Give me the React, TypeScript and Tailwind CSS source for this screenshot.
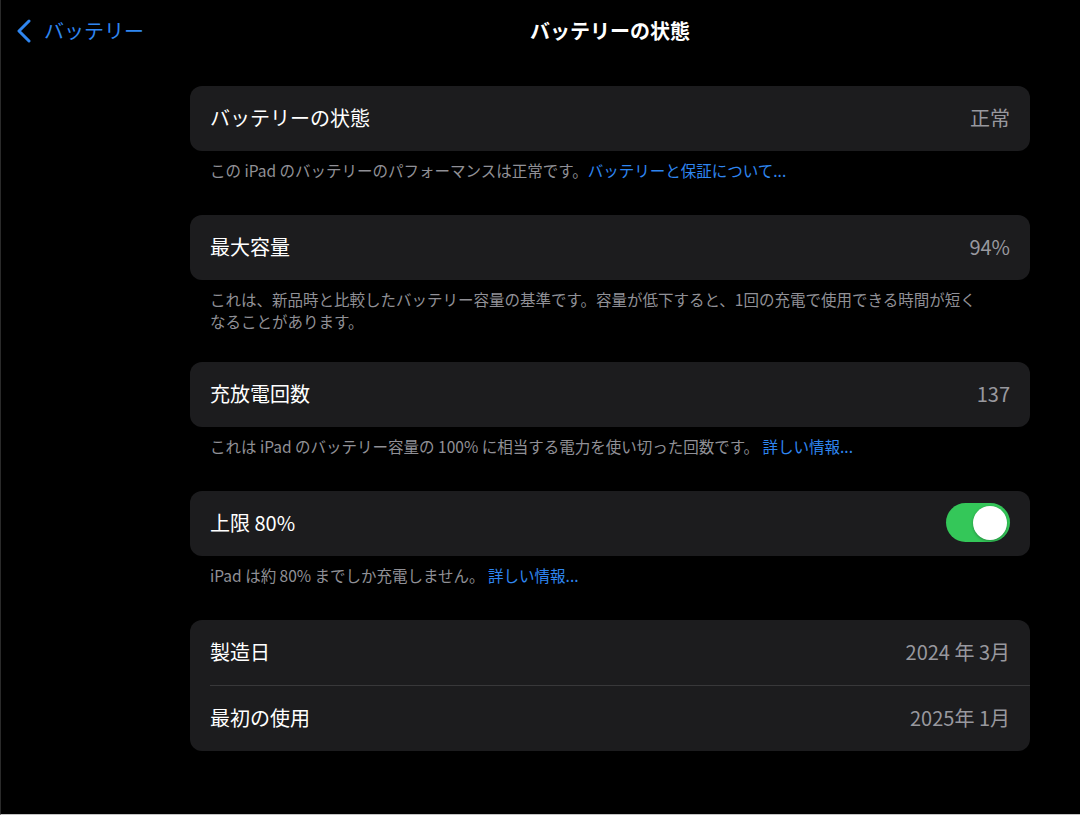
import React from "react";

const font = { fontFamily: '"Noto Sans CJK JP", "Noto Sans", sans-serif' };

function Row({ label, value, children }: { label: string; value?: string; children?: React.ReactNode }) {
  return (
    <div className="h-[65px] px-[20px] pb-[2px] flex items-center justify-between">
      <span className="text-[20px] text-white">{label}</span>
      {value !== undefined ? <span className="text-[20px] text-[#98989e]">{value}</span> : children}
    </div>
  );
}

function Card({ children }: { children: React.ReactNode }) {
  return <div className="rounded-[12px] bg-[#1c1c1e] overflow-hidden">{children}</div>;
}

function Footer({ children }: { children: React.ReactNode }) {
  return (
    <div className="px-[20px] pt-[8px] pb-[34px] text-[15.5px] leading-[22px] text-[#909096]">
      <div className="h-auto">{children}</div>
    </div>
  );
}

function Link({ children }: { children: React.ReactNode }) {
  return <span className="text-[#2f86f0]">{children}</span>;
}

export default function App() {
  return (
    <div
      className="w-[1080px] h-[815px] bg-black border-l border-l-[#2a2a2a] border-b border-b-[#c4c4c4] overflow-hidden"
      style={font}
    >
      <div className="relative h-[62px] flex items-center">
        <div className="absolute left-[15px] top-0 h-full flex items-center gap-[12px] text-[#2f86f0]">
          <svg width="16" height="24" viewBox="0 0 16 24" fill="none">
            <path d="M13 2 L3 12 L13 22" stroke="#2f86f0" strokeWidth="3" strokeLinecap="round" strokeLinejoin="round" />
          </svg>
          <span className="text-[20px]">バッテリー</span>
        </div>
        <div className="ml-[189px] mr-[50px] flex-1 text-center text-[20px] font-bold text-white">
          バッテリーの状態
        </div>
      </div>
      <div className="pl-[189px] pr-[50px] pt-[24px]">
        <Card>
          <Row label="バッテリーの状態" value="正常" />
        </Card>
        <Footer>
          この iPad のバッテリーのパフォーマンスは正常です。<Link>バッテリーと保証について...</Link>
        </Footer>

        <Card>
          <Row label="最大容量" value="94%" />
        </Card>
        <Footer>
          これは、新品時と比較したバッテリー容量の基準です。容量が低下すると、1回の充電で使用できる時間が短く
          <br />
          なることがあります。
        </Footer>

        <div className="-mt-[4px]">
          <Card>
            <Row label="充放電回数" value="137" />
          </Card>
        </div>
        <Footer>
          これは iPad のバッテリー容量の 100% に相当する電力を使い切った回数です。 <Link>詳しい情報...</Link>
        </Footer>

        <Card>
          <Row label="上限 80%">
            <div className="relative w-[64px] h-[39px] rounded-full bg-[#34c759]">
              <div className="absolute right-[3px] top-[2.5px] w-[34px] h-[34px] rounded-full bg-white shadow-[0_1px_3px_rgba(0,0,0,0.3)]" />
            </div>
          </Row>
        </Card>
        <Footer>
          iPad は約 80% までしか充電しません。 <Link>詳しい情報...</Link>
        </Footer>

        <Card>
          <Row label="製造日" value="2024 年 3月" />
          <div className="ml-[20px] h-px bg-[#38383a]" />
          <Row label="最初の使用" value="2025年 1月" />
        </Card>
      </div>
    </div>
  );
}
